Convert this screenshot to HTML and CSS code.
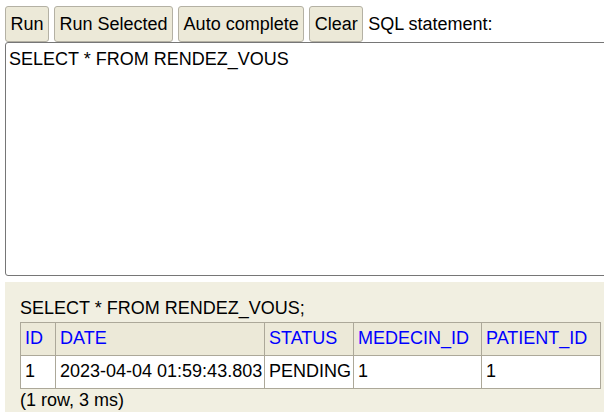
FILE: index.html
```html
<!DOCTYPE html>
<html>
<head>
<meta charset="utf-8">
<link rel="stylesheet" href="styles.css">
</head>
<body>
<div class="page">
  <div class="toolbar">
    <button class="btn">Run</button>
    <button class="btn">Run Selected</button>
    <button class="btn">Auto complete</button>
    <button class="btn">Clear</button>
    <span class="label">SQL statement:</span>
  </div>
  <textarea class="sql">SELECT * FROM RENDEZ_VOUS</textarea>
  <div class="result">
    <div class="stmt">SELECT * FROM RENDEZ_VOUS;</div>
    <table class="grid">
      <tr>
        <th class="c-id">ID</th>
        <th class="c-date">DATE</th>
        <th class="c-status">STATUS</th>
        <th class="c-med">MEDECIN_ID</th>
        <th class="c-pat">PATIENT_ID</th>
      </tr>
      <tr>
        <td>1</td>
        <td>2023-04-04 01:59:43.803</td>
        <td>PENDING</td>
        <td>1</td>
        <td>1</td>
      </tr>
    </table>
    <div class="info">(1 row, 3 ms)</div>
  </div>
</div>
</body>
</html>
```

FILE: styles.css
```css
html, body {
  margin: 0;
  padding: 0;
  overflow: hidden;
  background: #ffffff;
}
body {
  font-family: "Liberation Sans", Arial, sans-serif;
  font-size: 18px;
  color: #000;
}
.page {
  width: 610px;
  padding: 6px 0 0 5px;
}
.toolbar {
  display: flex;
  align-items: center;
  gap: 5px;
  height: 36px;
}
.btn {
  font-family: "Liberation Sans", Arial, sans-serif;
  font-size: 18px;
  line-height: 22px;
  height: 36px;
  padding: 0 4.5px;
  margin: 0;
  background: #ece9d8;
  border: 1px solid #b4b1a4;
  border-radius: 3px;
  color: #000;
}
.sql {
  display: block;
  box-sizing: border-box;
  width: 610px;
  height: 234px;
  margin: 0;
  padding: 5px 3px;
  border: 1px solid #767676;
  border-radius: 3px;
  font-family: "Liberation Sans", Arial, sans-serif;
  font-size: 18px;
  line-height: 22px;
  resize: none;
  overflow: hidden;
}
.result {
  margin-top: 6px;
  background: #f1efe1;
  padding: 16px 15px 10px 15px;
  height: 130px;
  box-sizing: border-box;
}
.stmt {
  line-height: 21px;
  margin-bottom: 3px;
}
.grid {
  width: 581px;
  border-collapse: collapse;
  table-layout: fixed;
}
.grid th, .grid td {
  border: 1px solid #aca899;
  padding: 3px 4px 5px 4px;
  line-height: 24px;
  text-align: left;
  font-weight: normal;
  white-space: nowrap;
  overflow: hidden;
}
.grid th {
  background: #ece9d8;
  color: #0000ff;
}
.grid td {
  background: #ffffff;
}
.c-id { width: 26px; }
.c-date { width: 200px; }
.c-status { width: 80px; }
.c-med { width: 119px; }
.c-pat { width: 110px; }
.info {
  margin-top: 1px;
  line-height: 21px;
}
```
